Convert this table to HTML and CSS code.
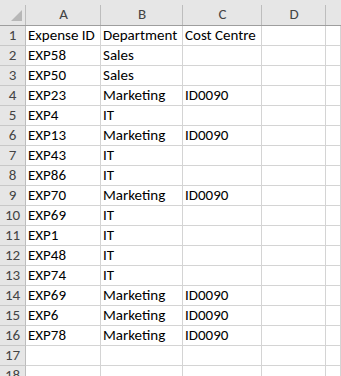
FILE: index.html
```html
<!DOCTYPE html>
<html>
<head>
<meta charset="utf-8">
<link rel="stylesheet" href="styles.css">
</head>
<body>
<div class="sheet">
  <div class="corner"><span class="tri"></span></div>
  <div class="colh">A</div><div class="colh">B</div><div class="colh">C</div><div class="colh">D</div><div class="colh last"></div>

  <div class="rowh">1</div><div class="c">Expense ID</div><div class="c">Department</div><div class="c">Cost Centre</div><div class="c"></div><div class="c"></div>
  <div class="rowh">2</div><div class="c">EXP58</div><div class="c">Sales</div><div class="c"></div><div class="c"></div><div class="c"></div>
  <div class="rowh">3</div><div class="c">EXP50</div><div class="c">Sales</div><div class="c"></div><div class="c"></div><div class="c"></div>
  <div class="rowh">4</div><div class="c">EXP23</div><div class="c">Marketing</div><div class="c">ID0090</div><div class="c"></div><div class="c"></div>
  <div class="rowh">5</div><div class="c">EXP4</div><div class="c">IT</div><div class="c"></div><div class="c"></div><div class="c"></div>
  <div class="rowh">6</div><div class="c">EXP13</div><div class="c">Marketing</div><div class="c">ID0090</div><div class="c"></div><div class="c"></div>
  <div class="rowh">7</div><div class="c">EXP43</div><div class="c">IT</div><div class="c"></div><div class="c"></div><div class="c"></div>
  <div class="rowh">8</div><div class="c">EXP86</div><div class="c">IT</div><div class="c"></div><div class="c"></div><div class="c"></div>
  <div class="rowh">9</div><div class="c">EXP70</div><div class="c">Marketing</div><div class="c">ID0090</div><div class="c"></div><div class="c"></div>
  <div class="rowh">10</div><div class="c">EXP69</div><div class="c">IT</div><div class="c"></div><div class="c"></div><div class="c"></div>
  <div class="rowh">11</div><div class="c">EXP1</div><div class="c">IT</div><div class="c"></div><div class="c"></div><div class="c"></div>
  <div class="rowh">12</div><div class="c">EXP48</div><div class="c">IT</div><div class="c"></div><div class="c"></div><div class="c"></div>
  <div class="rowh">13</div><div class="c">EXP74</div><div class="c">IT</div><div class="c"></div><div class="c"></div><div class="c"></div>
  <div class="rowh">14</div><div class="c">EXP69</div><div class="c">Marketing</div><div class="c">ID0090</div><div class="c"></div><div class="c"></div>
  <div class="rowh">15</div><div class="c">EXP6</div><div class="c">Marketing</div><div class="c">ID0090</div><div class="c"></div><div class="c"></div>
  <div class="rowh">16</div><div class="c">EXP78</div><div class="c">Marketing</div><div class="c">ID0090</div><div class="c"></div><div class="c"></div>
  <div class="rowh">17</div><div class="c"></div><div class="c"></div><div class="c"></div><div class="c"></div><div class="c"></div>
  <div class="rowh">18</div><div class="c"></div><div class="c"></div><div class="c"></div><div class="c"></div><div class="c"></div>
</div>
</body>
</html>
```
FILE: styles.css
```css
html, body {
  margin: 0;
  padding: 0;
  background: #ffffff;
  overflow: hidden;
}

.sheet {
  display: grid;
  grid-template-columns: 26px 75px 82px 79px 64px 1fr;
  grid-template-rows: 26px repeat(18, 20px);
  width: 341px;
  height: 376px;
  overflow: hidden;
  font-family: Calibri, Carlito, Lato, "Open Sans", sans-serif;
  font-size: 15px;
  color: #000;
}

.sheet > div {
  box-sizing: border-box;
  overflow: hidden;
  white-space: nowrap;
}

.corner {
  background: #e6e6e6 linear-gradient(#bdbdbd, #bdbdbd) right 5px / 1px calc(100% - 5px) no-repeat;
  border-bottom: 1px solid #9e9e9e;
  padding-right: 1px;
  display: flex;
  justify-content: flex-end;
  align-items: flex-end;
}

.tri {
  width: 0;
  height: 0;
  border-style: solid;
  border-width: 0 0 11px 11px;
  border-color: transparent transparent #b7b7b7 transparent;
  margin: 0 3px 4px 0;
}

.colh {
  background: #e6e6e6 linear-gradient(#bdbdbd, #bdbdbd) right 5px / 1px calc(100% - 5px) no-repeat;
  border-bottom: 1px solid #9e9e9e;
  color: #444;
  display: flex;
  justify-content: center;
  align-items: flex-end;
  padding-bottom: 3px;
  line-height: 16px;
}

.colh.last {
  background: #e6e6e6;
}

.rowh {
  background: #e6e6e6;
  border-right: 1px solid #bdbdbd;
  border-bottom: 1px solid #c8c8c8;
  color: #444;
  display: flex;
  justify-content: center;
  align-items: flex-end;
  line-height: 18px;
  padding-bottom: 1px;
}

.c {
  border-right: 1px solid #d4d4d4;
  border-bottom: 1px solid #d4d4d4;
  display: flex;
  align-items: flex-end;
  padding-left: 2px;
  line-height: 18px;
  padding-bottom: 1px;
}
```
